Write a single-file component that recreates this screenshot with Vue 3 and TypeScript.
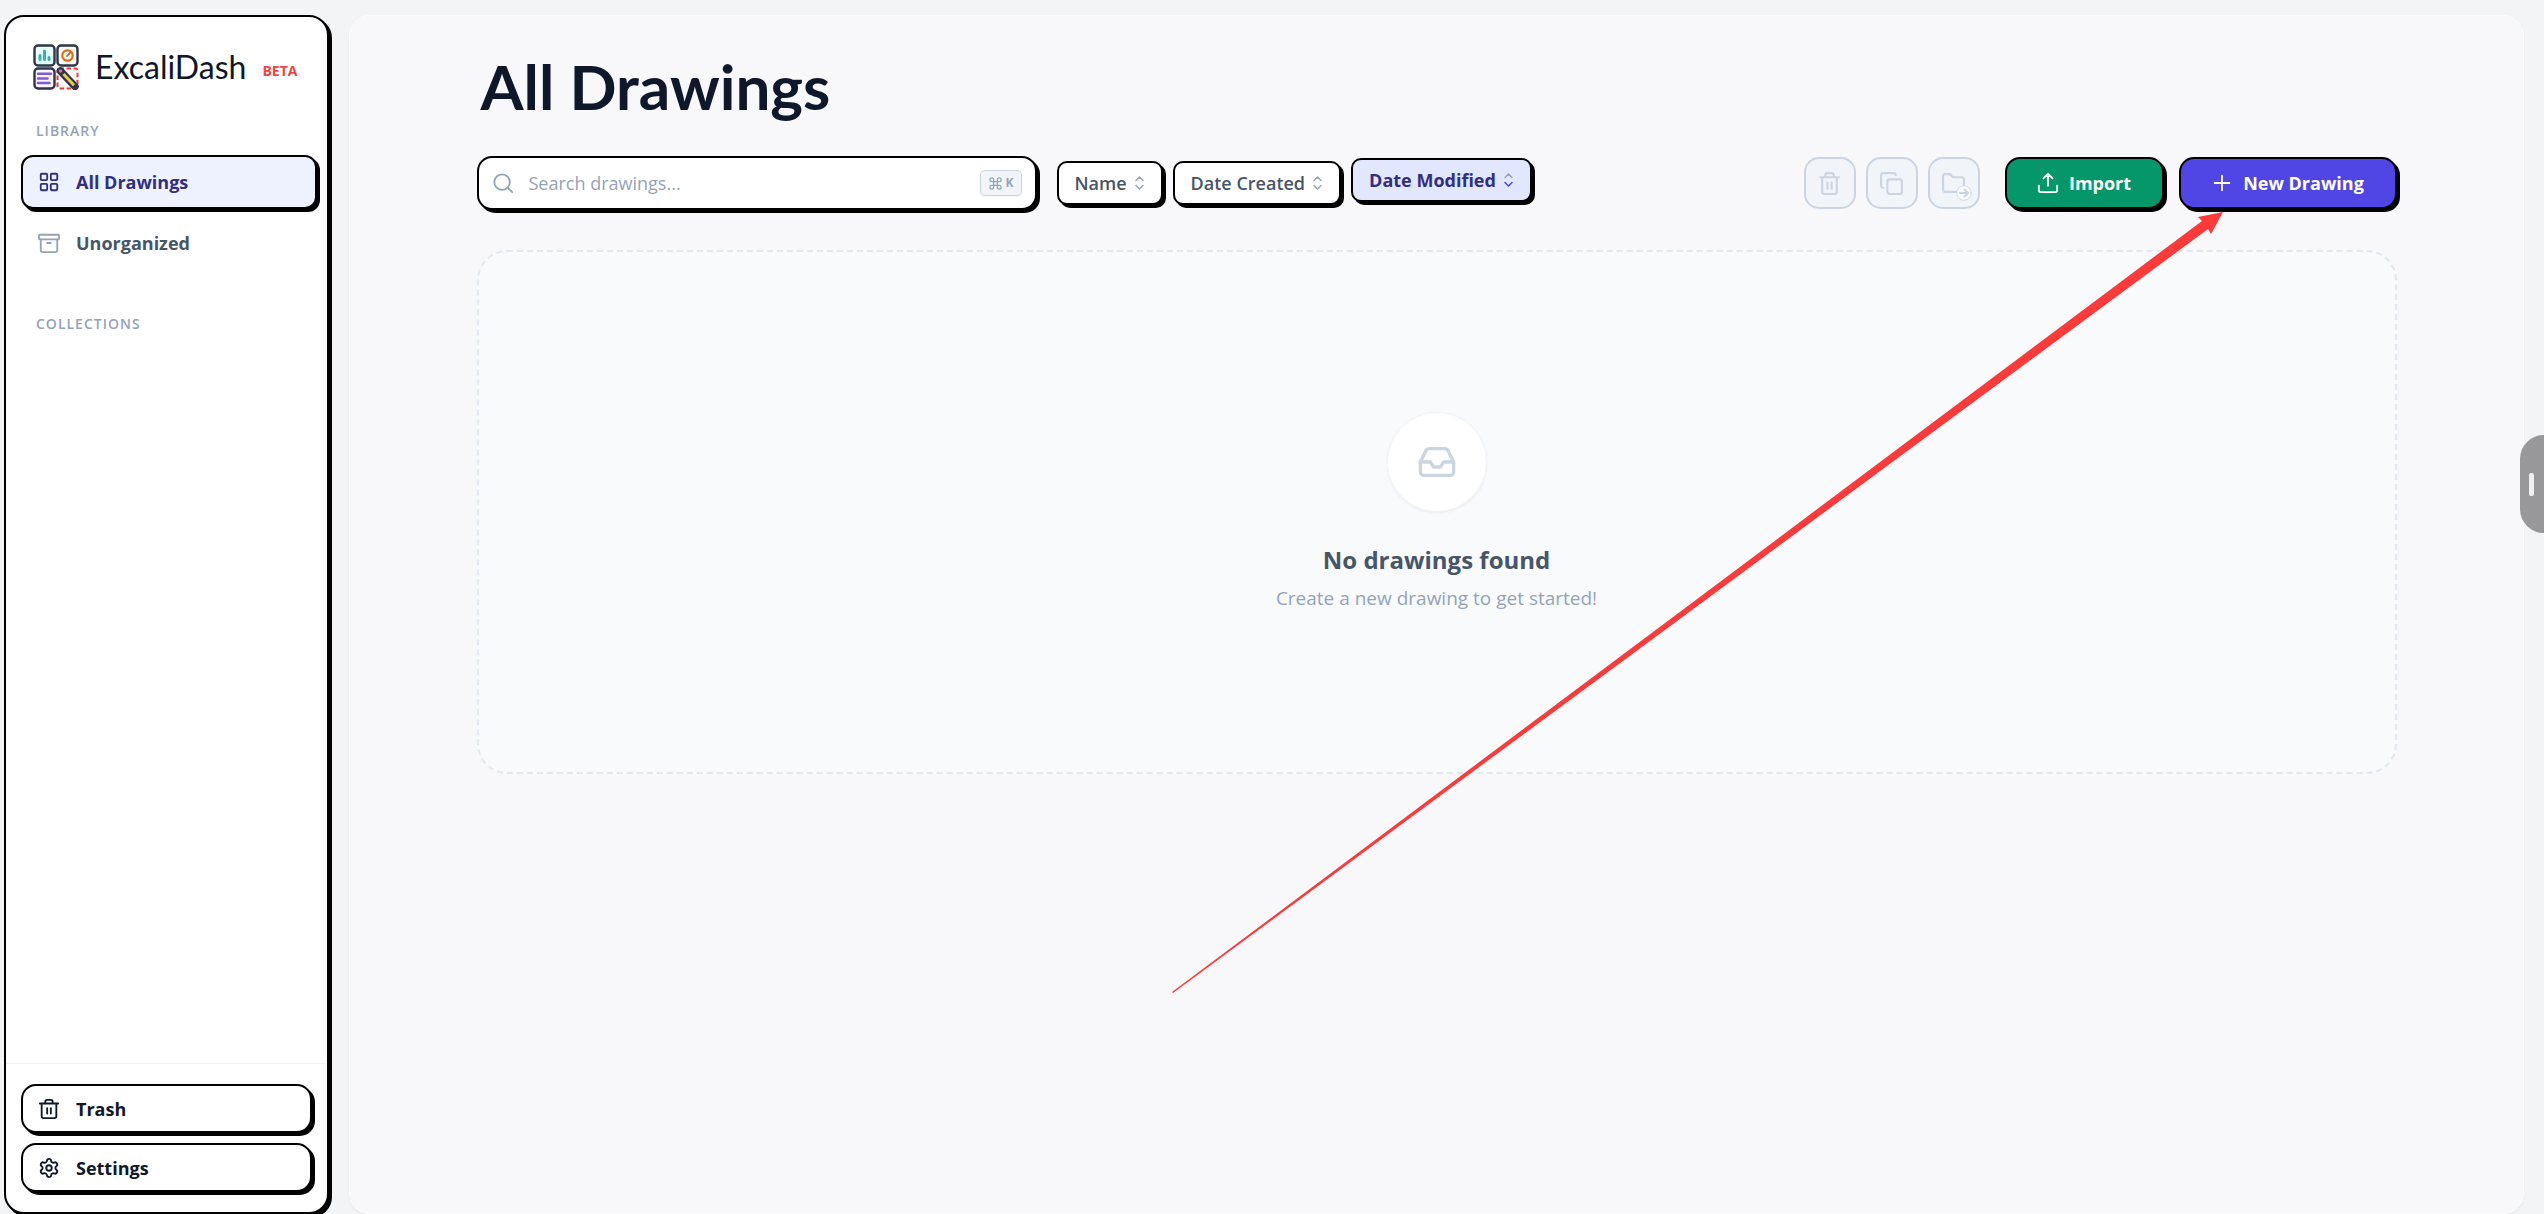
<script setup lang="ts">
import { ref } from 'vue'

type SortKey = 'name' | 'created' | 'modified'

const search = ref('')
const sortKey = ref<SortKey>('modified')
const sorts: { key: SortKey; label: string }[] = [
  { key: 'name', label: 'Name' },
  { key: 'created', label: 'Date Created' },
  { key: 'modified', label: 'Date Modified' },
]
</script>

<template>
  <div class="app">
    <aside class="sidebar">
      <div class="brand">
        <svg class="logo" viewBox="0 0 46 46" fill="none" aria-hidden="true">
          <rect x="1.5" y="1.5" width="20" height="20" rx="3.5" fill="#e6fffa" stroke="#2d3748" stroke-width="2.4" />
          <rect x="24.5" y="1.5" width="20" height="20" rx="3.5" fill="#fffaf0" stroke="#2d3748" stroke-width="2.4" />
          <rect x="1.5" y="24.5" width="20" height="20" rx="3.5" fill="#faf5ff" stroke="#2d3748" stroke-width="2.4" />
          <path d="M7 11.5v4M11.5 7v8.5M16 13.5v2" stroke="#38b2ac" stroke-width="3" stroke-linecap="round" />
          <circle cx="34.5" cy="11.5" r="5.2" stroke="#dd6b20" stroke-width="2.2" />
          <path d="M34 12l3.5-3.5" stroke="#dd6b20" stroke-width="1.8" stroke-linecap="round" />
          <path d="M5 29.7h13M5 34.5h9.5M5 39h11.5" stroke="#805ad5" stroke-width="2.6" stroke-linecap="round" />
          <rect x="24.5" y="24.5" width="20" height="20" rx="2" fill="#fff5f5" stroke="#e53e3e" stroke-width="2" stroke-dasharray="4.5 2.5" />
          <path d="M27.5 27L42 42.5" stroke="#2d3748" stroke-width="7.5" stroke-linecap="round" />
          <path d="M30.5 30L41 41.3" stroke="#ecc94b" stroke-width="3" />
          <circle cx="27.5" cy="27" r="1.7" fill="#ed64a6" />
        </svg>
        <span class="brand-name">ExcaliDash</span>
        <span class="beta">BETA</span>
      </div>

      <nav class="nav" aria-label="Library">
        <h2 class="group-title">LIBRARY</h2>
        <a class="nav-link active" href="#all">
          <svg class="icon" viewBox="0 0 24 24">
            <rect width="7" height="7" x="3" y="3" rx="1" />
            <rect width="7" height="7" x="14" y="3" rx="1" />
            <rect width="7" height="7" x="14" y="14" rx="1" />
            <rect width="7" height="7" x="3" y="14" rx="1" />
          </svg>
          All Drawings
        </a>
        <a class="nav-link" href="#unorganized">
          <svg class="icon muted" viewBox="0 0 24 24">
            <rect width="22" height="5" x="1" y="3" rx="1" />
            <path d="M3 8v12a2 2 0 0 0 2 2h14a2 2 0 0 0 2-2V8M10 12h4" />
          </svg>
          Unorganized
        </a>
        <h2 class="group-title collections">COLLECTIONS</h2>
      </nav>

      <div class="side-foot">
        <button class="foot-btn" type="button">
          <svg class="icon" viewBox="0 0 24 24">
            <path d="M2 6h20M20 6v14a2 2 0 0 1-2 2H6a2 2 0 0 1-2-2V6M8 6V4a2 2 0 0 1 2-2h4a2 2 0 0 1 2 2v2M10 11v6M14 11v6" />
          </svg>
          Trash
        </button>
        <button class="foot-btn" type="button">
          <svg class="icon" viewBox="0 0 24 24">
            <path d="M9.671 4.136a2.34 2.34 0 0 1 4.659 0 2.34 2.34 0 0 0 3.319 1.915 2.34 2.34 0 0 1 2.33 4.033 2.34 2.34 0 0 0 0 3.831 2.34 2.34 0 0 1-2.33 4.033 2.34 2.34 0 0 0-3.319 1.915 2.34 2.34 0 0 1-4.659 0 2.34 2.34 0 0 0-3.32-1.915 2.34 2.34 0 0 1-2.33-4.033 2.34 2.34 0 0 0 0-3.831A2.34 2.34 0 0 1 6.35 6.051a2.34 2.34 0 0 0 3.319-1.915" />
            <circle cx="12" cy="12" r="3" />
          </svg>
          Settings
        </button>
      </div>
    </aside>

    <main class="main">
      <div class="content">
        <h1 class="title">All Drawings</h1>

        <div class="toolbar">
          <label class="search">
            <svg class="icon muted" viewBox="0 0 24 24" aria-hidden="true">
              <circle cx="11" cy="11" r="8.5" />
              <path d="m22 22-4.500-4.500" />
            </svg>
            <input v-model="search" type="text" placeholder="Search drawings..." aria-label="Search drawings" />
            <kbd>
              <svg class="cmd" viewBox="0 0 24 24" aria-label="Command">
                <path d="M15 6v12a3 3 0 1 0 3-3H6a3 3 0 1 0 3 3V6a3 3 0 1 0-3 3h12a3 3 0 1 0-3-3" />
              </svg>K
            </kbd>
          </label>

          <div class="sorts">
            <button
              v-for="s in sorts"
              :key="s.key"
              type="button"
              class="sort"
              :class="{ on: sortKey === s.key }"
              @click="sortKey = s.key"
            >
              {{ s.label }}
              <svg class="chevrons" viewBox="0 0 9 16">
                <path d="M1 5.500l3.500-3.500 3.500 3.500" />
                <path class="down" d="M1 10.500l3.500 3.500 3.500-3.500" />
              </svg>
            </button>
          </div>

          <div class="bulk">
            <button class="tool" type="button" disabled aria-label="Delete">
              <svg class="tool-icon" viewBox="0 0 24 24">
                <path d="M3 6h18M19 6v14a2 2 0 0 1-2 2H7a2 2 0 0 1-2-2V6M8 6V4a2 2 0 0 1 2-2h4a2 2 0 0 1 2 2v2M10 11v6M14 11v6" />
              </svg>
            </button>
            <button class="tool" type="button" disabled aria-label="Duplicate">
              <svg class="tool-icon" viewBox="0 0 24 24">
                <rect width="14" height="14" x="8" y="8" rx="2" />
                <path d="M4 16a2 2 0 0 1-2-2V4a2 2 0 0 1 2-2h10a2 2 0 0 1 2 2" />
              </svg>
            </button>
            <button class="tool" type="button" disabled aria-label="Move">
              <svg class="tool-icon" viewBox="0 0 24 24">
                <path d="M20 20a2 2 0 0 0 2-2V8a2 2 0 0 0-2-2h-7.9a2 2 0 0 1-1.69-.9L9.6 3.9A2 2 0 0 0 7.93 3H4a2 2 0 0 0-2 2v13a2 2 0 0 0 2 2Z" />
              </svg>
              <svg class="move-badge" viewBox="0 0 16 16">
                <circle cx="8" cy="8" r="7.3" />
                <path d="M4 8h8M8.500 4.500L12 8l-3.500 3.500" />
              </svg>
            </button>
          </div>

          <button class="cta import" type="button">
            <svg class="icon" viewBox="0 0 24 24">
              <path d="M12 15V2M7 7l5-5 5 5M2 15v5a2 2 0 0 0 2 2h16a2 2 0 0 0 2-2v-5" />
            </svg>
            Import
          </button>
          <div class="new-wrap">
            <button class="cta new" type="button">
              <svg class="icon" viewBox="0 0 24 24"><path d="M4 12h16M12 4v16" /></svg>
              New Drawing
            </button>
            <svg class="arrow" viewBox="0 0 1052 782" aria-hidden="true">
              <path d="M0 780L1030 9l-4-4L1051 0l-12 22-3-5L1 781z" fill="#fc3a3a" />
            </svg>
          </div>
        </div>

        <section class="empty">
          <div class="empty-badge">
            <svg class="inbox" viewBox="0 0 24 24">
              <path d="M22 12h-6l-2 3h-4l-2-3H2" />
              <path d="M5.45 5.11 2 12v6a2 2 0 0 0 2 2h16a2 2 0 0 0 2-2v-6l-3.45-6.89A2 2 0 0 0 16.76 4H7.24a2 2 0 0 0-1.79 1.11z" />
            </svg>
          </div>
          <h2>No drawings found</h2>
          <p>Create a new drawing to get started!</p>
        </section>
      </div>
    </main>

    <button class="drawer-handle" type="button" aria-label="Open panel"><span></span></button>
  </div>
</template>

<style>
body {
  margin: 0;
  background: #f3f4f6;
}
</style>

<style scoped>
* {
  box-sizing: border-box;
}
.app {
  position: relative;
  display: flex;
  gap: 20px;
  min-height: 100vh;
  padding: 15px 20px 0 4px;
  overflow: hidden;
  font-family: "Segoe UI", "Open Sans", "Noto Sans", sans-serif;
  color: #0f172a;
}
button {
  font: inherit;
  cursor: pointer;
}
svg {
  flex: none;
  display: block;
}
.icon,
.tool-icon,
.inbox,
.cmd,
.chevrons,
.move-badge {
  fill: none;
  stroke: currentColor;
  stroke-width: 2;
  stroke-linecap: round;
  stroke-linejoin: round;
}
.icon {
  width: 22px;
  height: 22px;
}
.muted {
  color: #94a3b8;
}

.sidebar {
  display: flex;
  flex-direction: column;
  flex: none;
  width: 325px;
  border: 2px solid #000;
  border-radius: 20px;
  background: #fff;
  box-shadow: 3px 3px 0 #000;
}
.brand {
  display: flex;
  align-items: center;
  padding: 27px 27px 0;
}
.logo {
  width: 46px;
  height: 46px;
}
.brand-name {
  margin-left: 16px;
  font: 32px/40px "Excalifont", "Lato", sans-serif;
}
.beta {
  margin-left: 16px;
  padding-top: 8px;
  font-size: 14px;
  line-height: 20px;
  font-weight: 700;
  color: #ef4444;
}
.nav {
  display: flex;
  flex-direction: column;
  padding: 31px 10px 0 15px;
}
.group-title {
  margin: 0 0 14px 15px;
  font-size: 14px;
  line-height: 20px;
  font-weight: 600;
  letter-spacing: 1px;
  color: #94a3b8;
}
.collections {
  margin-top: 37px;
}
.nav-link {
  display: flex;
  align-items: center;
  gap: 16px;
  height: 54px;
  margin-bottom: 7px;
  padding: 0 15px;
  border: 2px solid transparent;
  border-radius: 12px;
  font-size: 18px;
  font-weight: 700;
  color: #475569;
  text-decoration: none;
}
.nav-link.active {
  border-color: #000;
  background: #eef2ff;
  color: #312e81;
  box-shadow: 3px 3px 0 #000;
}
.side-foot {
  display: flex;
  flex-direction: column;
  gap: 10px;
  margin-top: auto;
  padding: 20px 15px;
  border-top: 1px solid #f1f1f3;
}
.foot-btn {
  display: flex;
  align-items: center;
  gap: 16px;
  height: 49px;
  padding: 0 15px;
  border: 2px solid #000;
  border-radius: 15px;
  background: #fff;
  font-size: 18px;
  font-weight: 700;
  color: #0f172a;
  box-shadow: 3px 3px 0 #000;
}

.main {
  flex: 1;
  min-width: 0;
  padding: 30px 40px;
  border: 1px solid #fcfcfd;
  border-radius: 20px;
  background: #f8f8fb;
  box-shadow: 0 1px 2px rgba(0, 0, 0, 0.05);
}
.content {
  max-width: 1920px;
  margin: 0 auto;
}
.title {
  margin: 0 0 30px;
  padding-left: 4px;
  font: 700 62px/80px "Excalifont", "Lato", sans-serif;
}
.toolbar {
  display: flex;
  align-items: center;
}
.search {
  display: flex;
  align-items: center;
  flex: 0 1 560px;
  min-width: 240px;
  height: 54px;
  padding: 0 13px;
  border: 2px solid #000;
  border-radius: 15px;
  background: #fff;
  box-shadow: 3px 3px 0 #000;
}
.search input {
  flex: 1;
  min-width: 0;
  margin-left: 15px;
  padding: 0;
  border: 0;
  outline: 0;
  background: none;
  font: inherit;
  font-size: 18px;
  color: #0f172a;
}
.search input::placeholder {
  color: #94a3b8;
  opacity: 1;
}
kbd {
  display: flex;
  align-items: center;
  justify-content: center;
  gap: 3px;
  width: 42px;
  height: 26px;
  border: 1px solid #cbd5e1;
  border-radius: 5px;
  background: #f1f5f9;
  font: 700 12px/20px "Open Sans", sans-serif;
  color: #94a3b8;
  box-shadow: 0 1px 2px rgba(0, 0, 0, 0.05);
}
.cmd {
  width: 15px;
  height: 15px;
}
.sorts {
  display: flex;
  gap: 10px;
  margin-left: 20px;
}
.sort {
  display: flex;
  align-items: center;
  gap: 8px;
  height: 44px;
  padding: 0 17px 0 16px;
  border: 2px solid #000;
  border-radius: 10px;
  background: #fff;
  font-size: 18px;
  font-weight: 600;
  color: #475569;
  white-space: nowrap;
  box-shadow: 3px 3px 0 #000;
}
.sort.on {
  background: #e0e7ff;
  color: #312e81;
  font-weight: 700;
  transform: translateY(-3px);
}
.chevrons {
  width: 9px;
  height: 16px;
  stroke-width: 1.5px;
  color: #94a3b8;
}
.sort.on .down {
  stroke: #4f46e5;
}
.bulk {
  display: flex;
  gap: 10px;
  margin-left: auto;
  padding-left: 20px;
}
.tool {
  position: relative;
  display: flex;
  align-items: center;
  justify-content: center;
  width: 52px;
  height: 52px;
  padding: 0;
  border: 2px solid #cbd5e1;
  border-radius: 15px;
  background: #f1f5f9;
  color: #cbd5e1;
}
.tool-icon {
  width: 25px;
  height: 25px;
}
.move-badge {
  position: absolute;
  right: 6px;
  bottom: 6px;
  width: 16px;
  height: 16px;
  stroke-width: 1px;
  fill: #fff;
}
.move-badge path {
  fill: none;
  stroke-width: 2px;
}
.cta {
  display: flex;
  align-items: center;
  justify-content: center;
  gap: 10px;
  height: 52px;
  border: 2px solid #000;
  border-radius: 15px;
  font-size: 18px;
  font-weight: 700;
  color: #fff;
  white-space: nowrap;
  box-shadow: 3px 3px 0 #000;
}
.import {
  width: 159px;
  margin-left: 25px;
  background: #059669;
}
.new-wrap {
  position: relative;
  margin-left: 15px;
}
.new {
  width: 218px;
  background: #4f46e5;
}
.arrow {
  position: absolute;
  top: 55px;
  right: 173px;
  width: 1052px;
  height: 782px;
  pointer-events: none;
}

.empty {
  display: flex;
  flex-direction: column;
  align-items: center;
  height: 524px;
  margin-top: 40px;
  padding-top: 160px;
  border: 2px dashed #e2e8f0;
  border-radius: 30px;
  background: #f8fafc;
}
.empty-badge {
  display: flex;
  align-items: center;
  justify-content: center;
  width: 100px;
  height: 100px;
  border: 1px solid #f1f5f9;
  border-radius: 50%;
  background: #fff;
  color: #cbd5e1;
  box-shadow: 0 1px 3px rgba(0, 0, 0, 0.06);
}
.inbox {
  width: 40px;
  height: 40px;
}
.empty h2 {
  margin: 30px 0 0;
  font-size: 24px;
  line-height: 36px;
  font-weight: 700;
  color: #475569;
}
.empty p {
  margin: 6px 0 0;
  font-size: 19px;
  line-height: 28px;
  color: #94a3b8;
}

.drawer-handle {
  position: absolute;
  top: 435px;
  right: 0;
  width: 24px;
  height: 98px;
  padding: 0 0 0 9px;
  border: 0;
  border-radius: 24px 0 0 24px;
  background: #98989a;
}
.drawer-handle span {
  display: block;
  width: 5px;
  height: 23px;
  border-radius: 2px;
  background: #f0f0f0;
}
</style>
